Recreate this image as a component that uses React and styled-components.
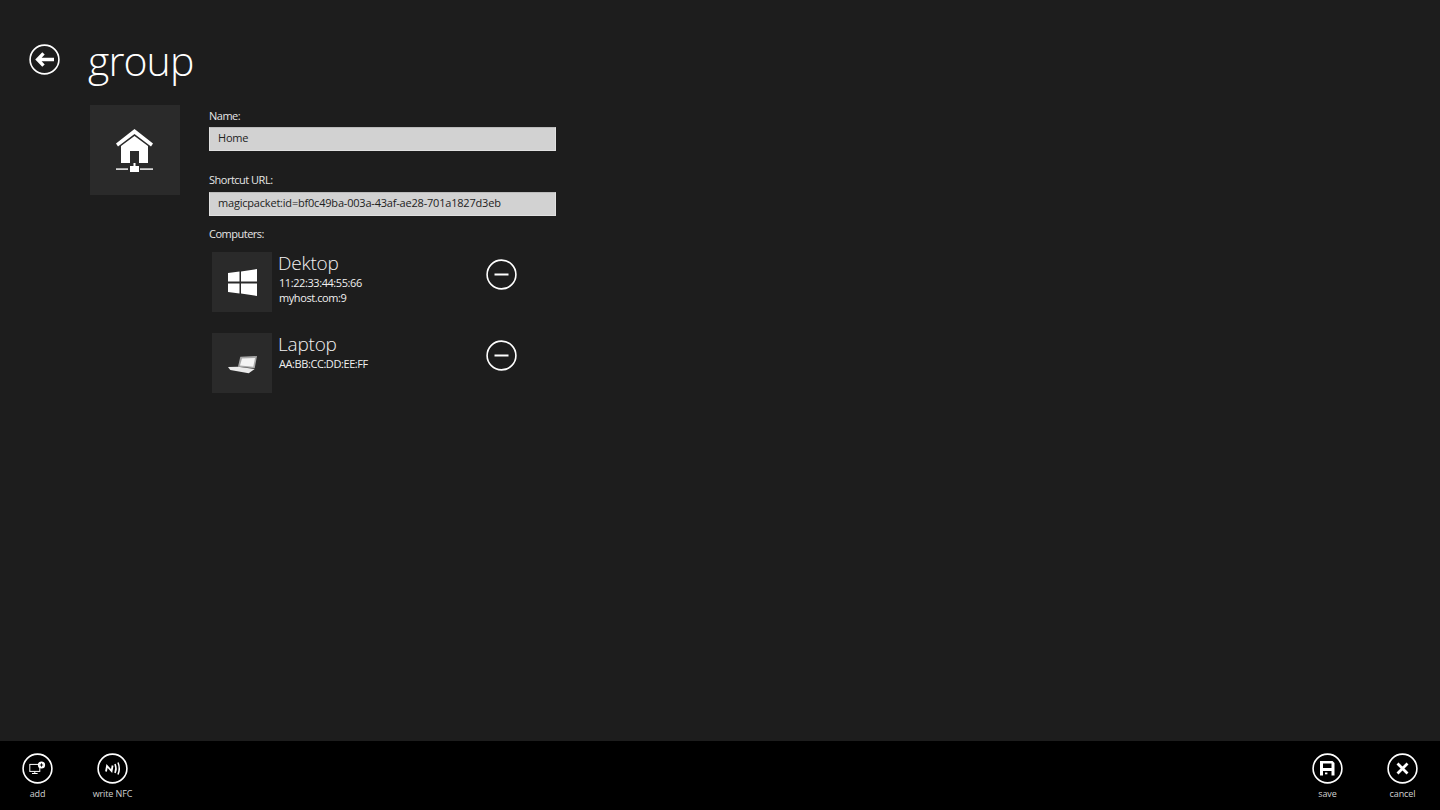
import React from "react";
import styled, { createGlobalStyle } from "styled-components";

const Global = createGlobalStyle`
  html, body { margin: 0; padding: 0; background: #1d1d1d; }
  body { font-family: "Open Sans", "Noto Sans", sans-serif; color: #fff; }
  * { box-sizing: border-box; }
`;

const Screen = styled.div`
  width: 1440px;
  height: 810px;
  display: flex;
  flex-direction: column;
  background: #1d1d1d;
  overflow: hidden;
`;
const Content = styled.main`
  flex: 1;
  min-height: 0;
  padding: 40px 0 0 29px;
`;
const Header = styled.header`
  display: flex;
  align-items: flex-start;
  height: 65px;
`;
const BackButton = styled.button`
  width: 31px;
  height: 31px;
  padding: 0;
  margin: 4px 28px 0 0;
  border: 0;
  background: none;
  color: #fff;
  display: block;
`;
const Title = styled.h1`
  margin: 0;
  font-size: 41px;
  line-height: 40px;
  font-weight: 300;
  letter-spacing: -0.9px;
`;
const Body = styled.div`
  display: flex;
  align-items: flex-start;
  padding-left: 61px;
`;
const GroupTile = styled.div`
  width: 90px;
  height: 90px;
  background: #2a2a2a;
  display: flex;
  align-items: center;
  justify-content: center;
  margin-right: 29px;
`;
const HouseSlot = styled.span`
  display: block;
  margin: 1px 1px 0 0;
`;
const Form = styled.div`
  width: 347px;
  display: flex;
  flex-direction: column;
`;
const Label = styled.label`
  display: block;
  font-size: 11px;
  line-height: 16px;
  color: #e6e6e6;
  height: 22px;
  padding-top: ${(p) => (p.$first ? 3 : 2)}px;
  letter-spacing: -0.5px;
`;
const TextField = styled.div`
  height: 24px;
  background: #d2d2d2;
  border: 1px solid #e0e0e0;
  border-top-color: #bbb;
  color: #222;
  font-size: 11px;
  line-height: 20px;
  padding-left: 8px;
  white-space: nowrap;
  letter-spacing: -0.2px;
`;
const Spacer = styled.div`
  height: ${(p) => p.$h}px;
`;
const ComputerList = styled.div`
  display: flex;
  flex-direction: column;
  gap: 21px;
  padding: 6px 0 0 3px;
`;
const ComputerRow = styled.div`
  display: flex;
  align-items: flex-start;
  height: 60px;
`;
const ComputerTile = styled.div`
  width: 60px;
  height: 60px;
  background: #2a2a2a;
  display: flex;
  align-items: center;
  justify-content: center;
  flex: none;
`;
const ComputerInfo = styled.div`
  width: 214px;
  padding-left: 6px;
`;
const ComputerName = styled.div`
  font-size: 19px;
  font-weight: 300;
  line-height: 23px;
  color: #f2f2f2;
  letter-spacing: -0.2px;
`;
const ComputerDetail = styled.div`
  font-size: 11px;
  line-height: 15px;
  color: #f0f0f0;
  letter-spacing: -0.42px;
  padding-left: 1px;
`;
const RemoveButton = styled.button`
  width: 31px;
  height: 31px;
  padding: 0;
  margin-top: 7px;
  border: 0;
  background: none;
  color: #fff;
  display: block;
`;
const AppBar = styled.footer`
  height: 69px;
  flex: none;
  background: #000;
  display: flex;
  justify-content: space-between;
  padding: 12px 0 0;
`;
const BarGroup = styled.div`
  display: flex;
`;
const BarItem = styled.button`
  width: 75px;
  padding: 0;
  border: 0;
  background: none;
  color: #d0d0d0;
  font-family: inherit;
  font-size: 9px;
  line-height: 12px;
  display: flex;
  flex-direction: column;
  align-items: center;
  gap: 4px;
  letter-spacing: -0.1px;
`;
const BarCircle = styled.span`
  display: block;
  width: 31px;
  height: 31px;
  color: #fff;
`;

const Ring = ({ children, size = 31 }) => (
  <svg width={size} height={size} viewBox="0 0 31 31" fill="none" style={{ display: "block" }}>
    <circle cx="15.5" cy="15.5" r="14.4" stroke="currentColor" strokeWidth="1.6" />
    {children}
  </svg>
);

const BackIcon = () => (
  <Ring>
    <path d="M14.5 9.4 L8.6 15.5 L14.5 21.6 M9.5 15.5 H25" stroke="currentColor" strokeWidth="3.4" />
  </Ring>
);
const MinusIcon = () => (
  <Ring>
    <rect x="8.5" y="14.5" width="14" height="2" fill="currentColor" />
  </Ring>
);
const HouseIcon = () => (
  <svg width="37" height="43" viewBox="0 0 37 43" fill="#fff" style={{ display: "block" }}>
    <path d="M18.5 0 L37 14.5 L35 17.5 L18.5 5 L2 17.5 L0 14.5 Z" />
    <path d="M18.5 7 L32 17 V34 H23 V22 H14 V34 H5 V17 Z" />
    <rect x="0" y="39.4" width="12" height="1.4" />
    <rect x="24" y="39.4" width="13" height="1.4" />
    <rect x="14" y="37" width="9" height="6" />
    <rect x="17.5" y="34" width="2" height="3" />
  </svg>
);
const WindowsIcon = () => (
  <svg width="29" height="27" viewBox="0 0 29 27" fill="#fff" style={{ display: "block" }}>
    <path d="M0 4 L11.5 2.6 L11.5 12.6 L0 12.6 Z" />
    <path d="M13 2.4 L29 0 L29 12.6 L13 12.6 Z" />
    <path d="M0 14.4 L11.5 14.4 L11.5 24.4 L0 23 Z" />
    <path d="M13 14.4 L29 14.4 L29 27 L13 24.6 Z" />
  </svg>
);
const LaptopIcon = () => (
  <svg width="29" height="18" viewBox="0 0 29 18" style={{ display: "block", marginTop: 3 }}>
    <path d="M12.3 0.7 L29 0 L26.7 12.3 L10 10.7 Z" fill="#a8a8a8" />
    <path d="M14 2.5 L27 2 L25.3 10.8 L12 9.5 Z" fill="#f4f4f4" />
    <path d="M0 11 L10 10.7 L26.7 13 L20.7 17.3 L2.3 14 Z" fill="#eaeaea" />
  </svg>
);
const AddIcon = () => (
  <Ring>
    <rect x="7.8" y="11.4" width="10" height="7" stroke="currentColor" strokeWidth="1" />
    <rect x="10" y="20" width="5.6" height="1" fill="currentColor" />
    <rect x="12.3" y="18.5" width="1" height="2" fill="currentColor" />
    <circle cx="19.5" cy="12" r="3.6" fill="currentColor" />
    <path d="M17.8 12 H21.2 M19.5 10.3 V13.7" stroke="#000" strokeWidth="0.9" />
  </Ring>
);
const NfcIcon = () => (
  <Ring>
    <path d="M9 18.5 L10 13 L14.6 18 L15.6 12.5" stroke="currentColor" strokeWidth="1.8" />
    <path d="M18 11 Q20 15.5 18 20" stroke="currentColor" strokeWidth="1.5" />
    <path d="M21 9.5 Q23.5 15.5 21 21.5" stroke="currentColor" strokeWidth="1.5" />
  </Ring>
);
const SaveIcon = () => (
  <Ring>
    <path fillRule="evenodd" fill="currentColor" d="M8 8 H20.5 L22.5 10 V22.5 H8 Z M11 10.5 V15 H19.5 V10.5 Z M11 18 V22.5 H19.5 V18 Z" />
    <rect x="13" y="19.5" width="2.4" height="1.8" fill="currentColor" />
  </Ring>
);
const CancelIcon = () => (
  <Ring>
    <path d="M10.5 10.5 L20.5 20.5 M20.5 10.5 L10.5 20.5" stroke="currentColor" strokeWidth="2.8" />
  </Ring>
);

const computers = [
  { name: "Dektop", icon: <WindowsIcon />, details: ["11:22:33:44:55:66", "myhost.com:9"] },
  { name: "Laptop", icon: <LaptopIcon />, details: ["AA:BB:CC:DD:EE:FF"] },
];

export default function App() {
  return (
    <Screen>
      <Global />
      <Content>
        <Header>
          <BackButton aria-label="back"><BackIcon /></BackButton>
          <Title>group</Title>
        </Header>
        <Body>
          <GroupTile><HouseSlot><HouseIcon /></HouseSlot></GroupTile>
          <Form>
            <Label $first>Name:</Label>
            <TextField>Home</TextField>
            <Spacer $h={19} />
            <Label>Shortcut URL:</Label>
            <TextField>magicpacket:id=bf0c49ba-003a-43af-ae28-701a1827d3eb</TextField>
            <Spacer $h={8} />
            <Label>Computers:</Label>
            <ComputerList>
              {computers.map((c) => (
                <ComputerRow key={c.name}>
                  <ComputerTile>{c.icon}</ComputerTile>
                  <ComputerInfo>
                    <ComputerName>{c.name}</ComputerName>
                    {c.details.map((d) => <ComputerDetail key={d}>{d}</ComputerDetail>)}
                  </ComputerInfo>
                  <RemoveButton aria-label="remove"><MinusIcon /></RemoveButton>
                </ComputerRow>
              ))}
            </ComputerList>
          </Form>
        </Body>
      </Content>
      <AppBar>
        <BarGroup>
          <BarItem><BarCircle><AddIcon /></BarCircle>add</BarItem>
          <BarItem><BarCircle><NfcIcon /></BarCircle>write NFC</BarItem>
        </BarGroup>
        <BarGroup>
          <BarItem><BarCircle><SaveIcon /></BarCircle>save</BarItem>
          <BarItem><BarCircle><CancelIcon /></BarCircle>cancel</BarItem>
        </BarGroup>
      </AppBar>
    </Screen>
  );
}
